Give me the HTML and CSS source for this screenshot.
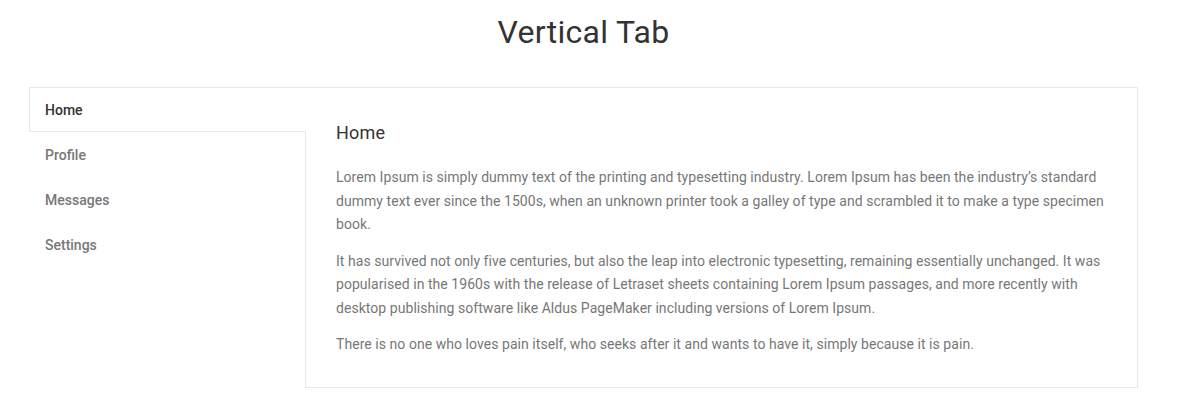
FILE: index.html
```html
<!DOCTYPE html>
<html lang="en">
<head>
<meta charset="utf-8">
<title>Vertical Tab</title>
<link rel="stylesheet" href="styles.css">
</head>
<body>
<div class="page">
  <h1 class="title">Vertical Tab</h1>
  <div class="tabs">
    <ul class="tab-list">
      <li class="tab active">Home</li>
      <li class="tab">Profile</li>
      <li class="tab">Messages</li>
      <li class="tab">Settings</li>
    </ul>
    <div class="panel">
      <h2 class="panel-title">Home</h2>
      <p>Lorem Ipsum is simply dummy text of the printing and typesetting industry. Lorem Ipsum has been the industry’s standard dummy text ever since the 1500s, when an unknown printer took a galley of type and scrambled it to make a type specimen book.</p>
      <p>It has survived not only five centuries, but also the leap into electronic typesetting, remaining essentially unchanged. It was popularised in the 1960s with the release of Letraset sheets containing Lorem Ipsum passages, and more recently with desktop publishing software like Aldus PageMaker including versions of Lorem Ipsum.</p>
      <p>There is no one who loves pain itself, who seeks after it and wants to have it, simply because it is pain.</p>
    </div>
  </div>
</div>
</body>
</html>
```
FILE: styles.css
```css
html, body {
  margin: 0;
  padding: 0;
  background: #fff;
}
body {
  font-family: Roboto, "Liberation Sans", sans-serif;
  color: #777;
}
.page {
  width: 1109px;
  margin-left: 29px;
}
.title {
  margin: 0;
  padding-top: 12px;
  height: 87px;
  box-sizing: border-box;
  text-align: center;
  font-size: 32px;
  line-height: 40px;
  font-weight: 400;
  color: #333;
  letter-spacing: 0.3px;
}
.tabs {
  display: grid;
  grid-template-columns: 276px 1fr;
}
.tab-list {
  list-style: none;
  margin: 0;
  padding: 0;
}
.tab {
  height: 45px;
  line-height: 44px;
  padding-left: 15px;
  font-size: 14px;
  font-weight: 500;
  color: #777;
  box-sizing: border-box;
  border: 1px solid transparent;
  border-right: none;
}
.tab.active {
  color: #333;
  border-color: #e8e8e8;
  background: #fff;
  position: relative;
  z-index: 1;
  margin-right: -1px;
}
.panel {
  border: 1px solid #e8e8e8;
  padding: 33px 30px 22px 30px;
  min-height: 301px;
  box-sizing: border-box;
}
.panel-title {
  margin: 0 0 21px;
  font-size: 18px;
  line-height: 24px;
  font-weight: 400;
  color: #333;
  letter-spacing: 0.2px;
}
.panel p {
  margin: 0 0 13px;
  font-size: 14px;
  line-height: 23.5px;
  letter-spacing: 0.05px;
}
.panel p:last-child {
  margin-bottom: 0;
}
```
